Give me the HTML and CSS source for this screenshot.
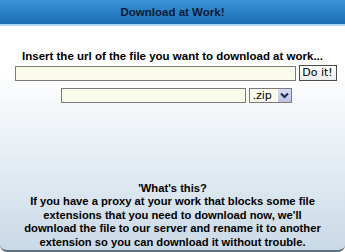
FILE: index.html
```html
<!DOCTYPE html>
<html>
<head>
<meta charset="utf-8">
<link rel="stylesheet" href="styles.css">
</head>
<body>
<div class="panel">
  <div class="header">Download at Work!</div>
  <div class="content">
    <div class="prompt">Insert the url of the file you want to download at work...</div>
    <div class="row row-url">
      <input class="field field-url" type="text">
      <button class="btn">Do it!</button>
    </div>
    <div class="row row-name">
      <input class="field field-name" type="text">
      <div class="select">
        <span class="select-value">.zip</span>
        <span class="select-arrow">
          <svg width="9" height="7" viewBox="0 0 9 7"><path d="M1 1.5 L4.5 5 L8 1.5" fill="none" stroke="#1c2a50" stroke-width="2"/></svg>
        </span>
      </div>
    </div>
    <div class="info">
      <div>'What's this?</div>
      <div>If you have a proxy at your work that blocks some file extensions that you need to download now, we'll download the file to our server and rename it to another extension so you can download it without trouble.</div>
    </div>
  </div>
</div>
</body>
</html>
```
FILE: styles.css
```css
html, body {
  margin: 0;
  padding: 0;
  background: #ffffff;
}
.panel {
  width: 345px;
  height: 252px;
  box-sizing: border-box;
  display: flex;
  flex-direction: column;
  border-bottom: 2px solid #5d6f80;
  border-radius: 0 0 7px 7px;
  overflow: hidden;
  background: linear-gradient(to bottom, #ffffff 0px, #ffffff 70px, #eef3f8 130px, #c9d9e6 252px);
  font-family: "Liberation Sans", Arial, sans-serif;
}
.header {
  height: 24px;
  border-bottom: 2px solid #a9d8f3;
  background: linear-gradient(to bottom, #3d92d4 0%, #2a80c6 50%, #1a6db2 100%);
  color: #0a1a36;
  font-weight: bold;
  font-size: 11.5px;
  line-height: 24px;
  text-align: center;
}
.content {
  flex: 1;
  display: flex;
  flex-direction: column;
  align-items: center;
  padding-top: 23px;
}
.prompt {
  font-weight: bold;
  font-size: 11.5px;
  color: #000;
  line-height: 14px;
}
.row {
  display: flex;
  align-items: center;
  gap: 3px;
}
.row-url {
  margin-top: 2px;
  margin-left: 6px;
}
.row-name {
  margin-top: 7px;
  margin-left: 7px;
}
.field {
  box-sizing: border-box;
  height: 15px;
  border: 1px solid #7a7a7a;
  background: #fbfbec;
  padding: 0;
  margin: 0;
}
.field-url {
  width: 281px;
}
.field-name {
  width: 185px;
}
.btn {
  box-sizing: border-box;
  height: 16px;
  width: 38px;
  padding: 0;
  margin: 0;
  border: 1px solid #4a4a4a;
  background: linear-gradient(#ffffff, #ececec);
  font-family: "DejaVu Sans", Verdana, sans-serif;
  font-size: 11px;
  color: #000;
  line-height: 14px;
}
.select {
  box-sizing: border-box;
  display: flex;
  align-items: stretch;
  height: 15px;
  width: 43px;
  border: 1px solid #7a7a7a;
  background: #fbfbec;
}
.select-value {
  flex: 1;
  font-family: "DejaVu Sans", Verdana, sans-serif;
  font-size: 11px;
  line-height: 13px;
  padding-left: 3px;
  color: #000;
}
.select-arrow {
  width: 13px;
  display: flex;
  align-items: center;
  justify-content: center;
  background: linear-gradient(#d8dcf4, #bcc3e6);
  border-left: 1px solid #ffffff;
}
.info {
  margin-top: auto;
  margin-bottom: 1px;
  width: 310px;
  font-weight: bold;
  font-size: 11.2px;
  line-height: 13.4px;
  color: #000;
  text-align: center;
}
```
